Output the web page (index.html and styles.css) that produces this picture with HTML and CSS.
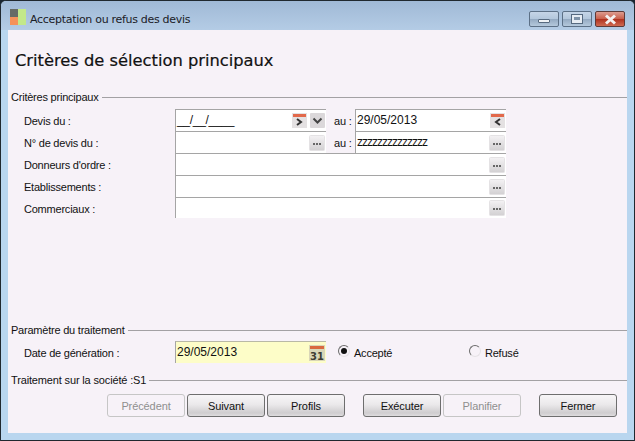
FILE: index.html
```html
<!DOCTYPE html>
<html lang="fr">
<head>
<meta charset="utf-8">
<title>Acceptation ou refus des devis</title>
<link rel="stylesheet" href="styles.css">
</head>
<body>
<svg class="defs" width="0" height="0"><defs>
  <symbol id="dots" viewBox="0 0 16 16"><rect x="0.5" y="0.5" width="15" height="15" rx="1" fill="url(#dg)" stroke="#e4e2e4"/><rect x="4" y="8" width="2" height="2" fill="#666"/><rect x="7" y="8" width="2" height="2" fill="#666"/><rect x="10" y="8" width="2" height="2" fill="#666"/></symbol>
  <linearGradient id="dg" x1="0" y1="0" x2="0" y2="1"><stop offset="0" stop-color="#f4f2f4"/><stop offset="1" stop-color="#d2d0d2"/></linearGradient>
</defs></svg>
<div class="window">
  <header class="titlebar">
    <svg class="app-icon" width="16" height="16" viewBox="0 0 16 16"><rect x="0" y="0" width="8" height="8" fill="#666b66"/><rect x="0" y="8" width="8" height="8" fill="#f5925a"/><rect x="8" y="0" width="8" height="16" fill="#c3e88a"/></svg>
    <span class="title-text">Acceptation ou refus des devis</span>
    <div class="caption">
      <div class="cap cap-min"><span class="glyph-min"></span></div>
      <div class="cap cap-max"><span class="glyph-max"></span></div>
      <div class="cap cap-close"><svg width="13" height="11" viewBox="0 0 13 11"><path d="M2 1.5 L11 9.5 M11 1.5 L2 9.5" stroke="#f4f1f1" stroke-width="3"/></svg></div>
    </div>
  </header>
  <main class="client">
    <h1 class="heading">Critères de sélection principaux</h1>

    <div class="legend legend-main"><span>Critères principaux</span><i></i></div>
    <div class="fields">
      <div class="row">
        <label class="lbl">Devis du :</label>
        <div class="input half"><span class="val mask">__/__/____</span>
          <svg class="ico" width="15" height="15" viewBox="0 0 15 15"><rect width="15" height="15" fill="#e4e1e2"/><rect x="1" y="1" width="13" height="3" fill="#e2694b"/><path d="M5 6 L9 9 L5 12" fill="none" stroke="#333" stroke-width="2"/></svg>
          <svg class="ico ico-drop" width="15" height="15" viewBox="0 0 15 15"><rect width="15" height="15" rx="1" fill="#dbd8da"/><path d="M3.5 5.5 L7.5 9.5 L11.5 5.5" fill="none" stroke="#444" stroke-width="2"/></svg>
        </div>
        <span class="au">au :</span>
        <div class="input half"><span class="val">29/05/2013</span>
          <svg class="ico" width="15" height="15" viewBox="0 0 15 15"><rect width="15" height="15" fill="#e4e1e2"/><rect x="1" y="1" width="13" height="3" fill="#e2694b"/><path d="M10 6 L6 9 L10 12" fill="none" stroke="#333" stroke-width="2"/></svg>
        </div>
      </div>
      <div class="row">
        <label class="lbl">N° de devis du :</label>
        <div class="input half"><span class="val"></span><svg class="ico" width="16" height="16"><use href="#dots"/></svg></div>
        <span class="au">au :</span>
        <div class="input half"><span class="val zeds">zzzzzzzzzzzzzz</span><svg class="ico" width="16" height="16"><use href="#dots"/></svg></div>
      </div>
      <div class="row">
        <label class="lbl">Donneurs d'ordre :</label>
        <div class="input full"><span class="val"></span><svg class="ico" width="16" height="16"><use href="#dots"/></svg></div>
      </div>
      <div class="row">
        <label class="lbl">Etablissements :</label>
        <div class="input full"><span class="val"></span><svg class="ico" width="16" height="16"><use href="#dots"/></svg></div>
      </div>
      <div class="row">
        <label class="lbl">Commerciaux :</label>
        <div class="input full"><span class="val"></span><svg class="ico" width="16" height="16"><use href="#dots"/></svg></div>
      </div>
    </div>

    <div class="legend legend-param"><span>Paramètre du traitement</span><i></i></div>
    <div class="row row-param">
      <label class="lbl">Date de génération :</label>
      <div class="input date"><span class="val">29/05/2013</span>
        <svg class="ico" width="16" height="16" viewBox="0 0 16 16"><rect width="16" height="16" fill="#d9d6b8"/><rect x="1" y="1" width="14" height="3" fill="#d9693f"/><text x="8" y="14.5" text-anchor="middle" class="cal-num">31</text></svg>
      </div>
      <div class="radio radio-a"><span class="radio-dot on"></span><span>Accepté</span></div>
      <div class="radio radio-b"><span class="radio-dot"></span><span>Refusé</span></div>
    </div>

    <div class="legend legend-soc"><span>Traitement sur la société :S1</span><i></i></div>
    <div class="actions">
      <button class="btn" disabled>Précédent</button>
      <button class="btn">Suivant</button>
      <button class="btn">Profils</button>
      <button class="btn btn-gap">Exécuter</button>
      <button class="btn" disabled>Planifier</button>
      <button class="btn btn-gap">Fermer</button>
    </div>
  </main>
</div>
</body>
</html>
```
FILE: styles.css
```css
html, body { margin: 0; padding: 0; }
body { width: 635px; height: 441px; overflow: hidden; background: #1a2530; font-family: "Liberation Sans", sans-serif; font-size: 11px; letter-spacing: -0.22px; color: #111; }
.defs { position: absolute; }
.window { box-sizing: border-box; width: 635px; height: 441px; border: 1px solid #20282f; border-radius: 6px 6px 0 0; background: #b9d6ef; padding: 0 7px 7px; display: flex; flex-direction: column; }
.titlebar { height: 29px; margin: 0 -7px; padding: 0 8px 0 9px; display: flex; align-items: center; background: linear-gradient(#a0b9d6, #b4cce5); border-radius: 5px 5px 0 0; flex: none; }
.app-icon { flex: none; margin-top: 2px; }
.title-text { margin-left: 4px; font-family: "DejaVu Sans", sans-serif; font-size: 11px; letter-spacing: -0.3px; color: #1a2026; margin-top: 7px; }
.caption { margin-left: auto; display: flex; gap: 3px; align-self: flex-start; margin-top: 10px; margin-right: 1px; }
.cap { box-sizing: border-box; width: 30px; height: 16px; border: 1px solid #5c7086; border-radius: 2px; display: flex; align-items: center; justify-content: center; background: linear-gradient(#c5d5e7 0, #b3c7dc 48%, #94aac2 52%, #b4c8dc 100%); }
.cap-close { background: linear-gradient(#dd9c90 0, #c9604c 48%, #b0321f 52%, #cf6a52 100%); border-color: #5e3a38; }
.glyph-min { display: block; width: 12px; height: 4px; margin-top: 4px; box-sizing: border-box; background: #eef2f6; border: 1px solid #566a80; border-radius: 1px; }
.glyph-max { display: block; width: 12px; height: 10px; box-sizing: border-box; border: 1px solid #566a80; background: #e6ecf3; position: relative; }
.glyph-max::after { content: ""; position: absolute; left: 2px; top: 2px; width: 6px; height: 3px; background: #7f93a8; }
.client { flex: 1; background: #f7f2f8; display: flex; flex-direction: column; }
.heading { margin: 19px 0 0 7px; height: 24px; font-family: "DejaVu Sans", sans-serif; font-weight: 400; font-size: 16.3px; line-height: 24px; color: #111; -webkit-text-stroke: 0.2px #111; letter-spacing: 0; }
.legend { display: flex; align-items: center; margin-left: 3px; height: 14px; line-height: 14px; }
.legend i { flex: 1; height: 1px; background: #a3a1a4; margin-left: 3px; }
.legend-main { margin-top: 17px; }
.legend-param { margin-top: 104px; }
.legend-soc { margin-top: 10px; letter-spacing: -0.15px; }
.fields { margin-top: 5px; display: flex; flex-direction: column; }
.row { display: flex; align-items: stretch; height: 22px; position: relative; }
.row-param { margin-top: 4px; }
.lbl { width: 151px; margin-left: 16px; flex: none; line-height: 24px; }
.input { box-sizing: border-box; height: 22px; background: #fff; border-top: 1px solid #a5a5a5; border-left: 1px solid #a5a5a5; display: flex; align-items: center; padding-right: 1px; gap: 3px; }
.row:last-child > .input.full { height: 21px; }
.half { width: 151px; }
.full { width: 331px; }
.val { flex: 1; padding-left: 1px; margin-bottom: 2px; font-size: 12px; letter-spacing: 0; white-space: nowrap; overflow: hidden; line-height: 18px; }
.mask { letter-spacing: -0.3px; }
.zeds { letter-spacing: -1px; }
.au { width: 29px; flex: none; padding-left: 8px; box-sizing: border-box; line-height: 24px; }
.ico { flex: none; display: block; }
.date { width: 151px; background: #fdfdc8; border-top-color: #b9b9a6; }
.cal-num { font-family: "DejaVu Sans", sans-serif; font-weight: 700; font-size: 10px; fill: #3d3d33; letter-spacing: 0; }
.radio { display: flex; align-items: center; gap: 4px; position: absolute; top: 1px; height: 22px; }
.radio-a { left: 330px; }
.radio-b { left: 461px; }
.radio-dot { box-sizing: border-box; display: block; width: 12px; height: 12px; margin-top: -4px; border-radius: 50%; border: 1px solid #6b6b6b; border-right-color: #e6e3e6; border-bottom-color: #e6e3e6; background: #f7f2f8; position: relative; }
.radio-dot.on::after { content: ""; position: absolute; left: 2px; top: 2px; width: 6px; height: 6px; border-radius: 50%; background: #111; }
.actions { display: flex; gap: 2px; margin-top: 7px; padding-left: 99px; }
.btn { box-sizing: border-box; width: 78px; height: 23px; padding: 0; border: 1px solid #6e6e6e; border-radius: 3px; background: linear-gradient(#f7f5f7 0, #ebe9eb 45%, #cfcdcf 85%, #dedcde 100%); font-family: "Liberation Sans", sans-serif; font-size: 11px; letter-spacing: -0.1px; color: #111; }
.btn:disabled { background: #f7f2f8; border-color: #c6c6c6; color: #8f8f8f; }
.btn-gap { margin-left: 16px; }
```
